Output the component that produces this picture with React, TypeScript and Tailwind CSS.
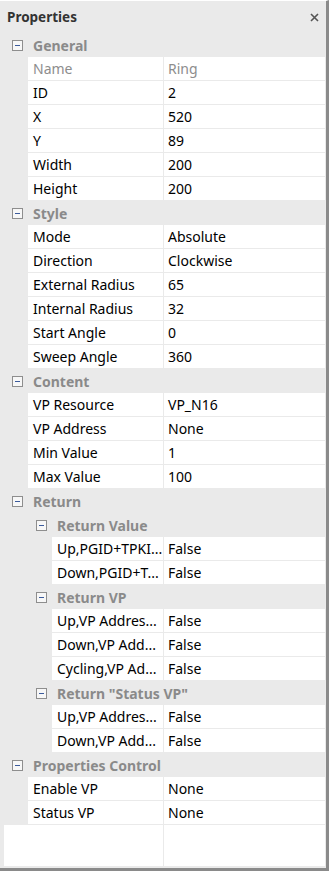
import React from 'react';

type Row =
  | { kind: 'cat'; level: number; title: string }
  | { kind: 'prop'; level: number; label: string; value: string; readOnly?: boolean };

const rows: Row[] = [
  { kind: 'cat', level: 0, title: 'General' },
  { kind: 'prop', level: 1, label: 'Name', value: 'Ring', readOnly: true },
  { kind: 'prop', level: 1, label: 'ID', value: '2' },
  { kind: 'prop', level: 1, label: 'X', value: '520' },
  { kind: 'prop', level: 1, label: 'Y', value: '89' },
  { kind: 'prop', level: 1, label: 'Width', value: '200' },
  { kind: 'prop', level: 1, label: 'Height', value: '200' },
  { kind: 'cat', level: 0, title: 'Style' },
  { kind: 'prop', level: 1, label: 'Mode', value: 'Absolute' },
  { kind: 'prop', level: 1, label: 'Direction', value: 'Clockwise' },
  { kind: 'prop', level: 1, label: 'External Radius', value: '65' },
  { kind: 'prop', level: 1, label: 'Internal Radius', value: '32' },
  { kind: 'prop', level: 1, label: 'Start Angle', value: '0' },
  { kind: 'prop', level: 1, label: 'Sweep Angle', value: '360' },
  { kind: 'cat', level: 0, title: 'Content' },
  { kind: 'prop', level: 1, label: 'VP Resource', value: 'VP_N16' },
  { kind: 'prop', level: 1, label: 'VP Address', value: 'None' },
  { kind: 'prop', level: 1, label: 'Min Value', value: '1' },
  { kind: 'prop', level: 1, label: 'Max Value', value: '100' },
  { kind: 'cat', level: 0, title: 'Return' },
  { kind: 'cat', level: 1, title: 'Return Value' },
  { kind: 'prop', level: 2, label: 'Up,PGID+TPKI...', value: 'False' },
  { kind: 'prop', level: 2, label: 'Down,PGID+T...', value: 'False' },
  { kind: 'cat', level: 1, title: 'Return VP' },
  { kind: 'prop', level: 2, label: 'Up,VP Addres...', value: 'False' },
  { kind: 'prop', level: 2, label: 'Down,VP Add...', value: 'False' },
  { kind: 'prop', level: 2, label: 'Cycling,VP Ad...', value: 'False' },
  { kind: 'cat', level: 1, title: 'Return "Status VP"' },
  { kind: 'prop', level: 2, label: 'Up,VP Addres...', value: 'False' },
  { kind: 'prop', level: 2, label: 'Down,VP Add...', value: 'False' },
  { kind: 'cat', level: 0, title: 'Properties Control' },
  { kind: 'prop', level: 1, label: 'Enable VP', value: 'None' },
  { kind: 'prop', level: 1, label: 'Status VP', value: 'None' },
];

const MinusBox = () => (
  <div className="w-[11px] h-[11px] shrink-0 border border-[#8e8e8e] bg-[#f7f7f7] flex items-center justify-center">
    <div className="w-[5px] h-px bg-[#3b5b9c]" />
  </div>
);

const CategoryRow = ({ level, title }: { level: number; title: string }) => (
  <div className="flex items-center h-[24px] bg-[#eaeaea]">
    <div className={level === 0 ? 'w-[8px] shrink-0' : 'w-[32px] shrink-0'} />
    <MinusBox />
    <span className="ml-[10px] font-bold text-[#8a8a8a] whitespace-nowrap">{title}</span>
  </div>
);

const PropRow = ({ level, label, value, readOnly }: { level: number; label: string; value: string; readOnly?: boolean }) => (
  <div className="flex h-[24px] bg-[#eaeaea]">
    <div className={level === 1 ? 'w-[24px] shrink-0' : 'w-[48px] shrink-0'} />
    <div className="flex flex-1 h-[23px] bg-white">
      <div
        className={`flex items-center pl-[5px] border-r border-[#eaeaea] whitespace-nowrap overflow-hidden ${
          level === 1 ? 'w-[136px]' : 'w-[112px]'
        } ${readOnly ? 'text-[#8d8d8d]' : 'text-black'}`}
      >
        {label}
      </div>
      <div className={`flex items-center pl-[4px] flex-1 ${readOnly ? 'text-[#8d8d8d]' : 'text-black'}`}>{value}</div>
    </div>
  </div>
);

export default function App() {
  return (
    <div className="w-[329px] h-[871px] flex flex-col bg-[#eaeaea] border-t border-t-white border-r-[3px] border-b-[3px] border-r-[#8a8a8a] border-b-[#8a8a8a] font-['Segoe_UI','Noto_Sans',sans-serif] text-[14px]">
      <div className="h-[32px] shrink-0 flex items-center justify-between pl-[7px] pr-[7px]">
        <span className="font-bold text-[#333333] text-[13.5px]">Properties</span>
        <svg width="9" height="9" viewBox="0 0 9 9" className="mt-px">
          <path d="M1 1L8 8M8 1L1 8" stroke="#555555" strokeWidth="1.6" />
        </svg>
      </div>
      <div className="flex-1 flex flex-col ml-[4px] mr-px mb-[2px] bg-white">
        {rows.map((r, i) =>
          r.kind === 'cat' ? (
            <CategoryRow key={i} level={r.level} title={r.title} />
          ) : (
            <PropRow key={i} level={r.level} label={r.label} value={r.value} readOnly={r.readOnly} />
          )
        )}
        <div className="flex-1 flex">
          <div className="w-[160px] border-r border-[#eaeaea]" />
          <div className="flex-1" />
        </div>
      </div>
    </div>
  );
}
